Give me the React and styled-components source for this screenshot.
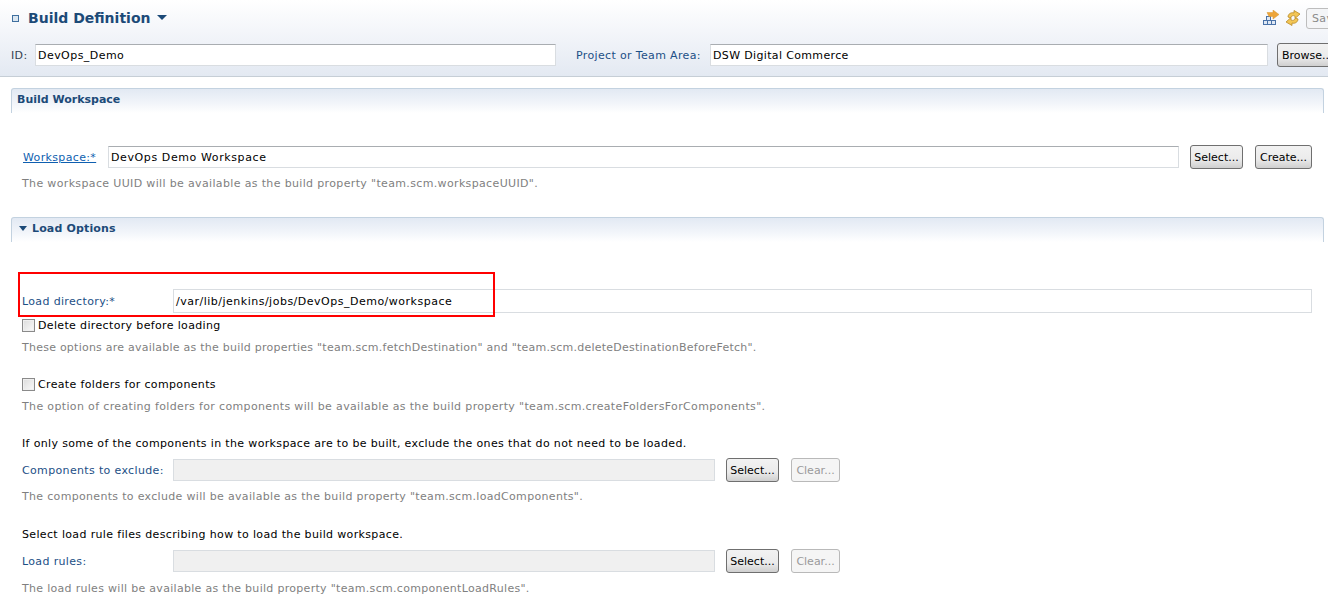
import React from 'react'
import styled, { createGlobalStyle } from 'styled-components'

const GlobalStyle = createGlobalStyle`
  html, body {
    margin: 0;
    padding: 0;
    background: #fff;
    overflow: hidden;
  }
  body {
    font-family: "DejaVu Sans", "Liberation Sans", sans-serif;
    font-size: 11px;
    letter-spacing: 0.35px;
    color: #000;
  }
`

const Page = styled.div`
  position: relative;
  width: 1328px;
  height: 600px;
  overflow: hidden;
`

const FormHeader = styled.header`
  height: 77px;
  box-sizing: border-box;
  border-bottom: 1px solid #c6ced6;
  background: linear-gradient(#ffffff 0%, #f4f6fa 40%, #e3e9f2 100%);
`

const TitleRow = styled.div`
  display: flex;
  align-items: center;
  height: 36px;
  padding-left: 12px;
`

const TitleBox = styled.span`
  width: 5px;
  height: 5px;
  border: 1px solid #3f6f9f;
  background: #dbe6f0;
  margin-right: 9px;
`

const Title = styled.h1`
  margin: 0;
  font-size: 14px;
  font-weight: 700;
  letter-spacing: 0;
  color: #1c4a78;
`

const Caret = styled.span`
  width: 0;
  height: 0;
  margin: -2px 0 0 7px;
  border-left: 5px solid transparent;
  border-right: 5px solid transparent;
  border-top: 5px solid #1c4a78;
`

const Tools = styled.div`
  display: flex;
  align-items: center;
  gap: 6px;
  margin-left: auto;
  margin-right: -18px;
`

const SaveButton = styled.span`
  display: block;
  width: 40px;
  height: 21px;
  margin-left: -1px;
  line-height: 19px;
  box-sizing: border-box;
  padding-left: 5px;
  border: 1px solid #bdbdbd;
  border-radius: 3px;
  color: #8a8a8a;
  background: #f4f5f7;
`

const IdRow = styled.div`
  display: flex;
  align-items: center;
  height: 22px;
  margin-top: 8px;
  padding-left: 11px;
`

const HeadLabel = styled.label`
  flex: none;
  width: ${(p) => p.$width}px;
  margin-left: ${(p) => p.$left || 0}px;
  color: ${(p) => (p.$link ? '#1c4f86' : '#333f4f')};
  white-space: nowrap;
`

const Input = styled.div`
  flex: none;
  box-sizing: border-box;
  width: ${(p) => p.$width}px;
  height: ${(p) => p.$height || 22}px;
  line-height: ${(p) => (p.$height || 22) - 1}px;
  padding-left: 2px;
  letter-spacing: ${(p) => p.$spacing || 0.45}px;
  background: ${(p) => (p.$disabled ? '#f0f0f0' : '#fff')};
  border: 1px solid #d9dde1;
  border-top-color: ${(p) => (p.$flat ? '#d9dde1' : '#a9adb1')};
  white-space: nowrap;
`

const Button = styled.button`
  flex: none;
  box-sizing: border-box;
  width: ${(p) => p.$width}px;
  height: 24px;
  margin-left: ${(p) => p.$left}px;
  padding: 0;
  font: inherit;
  color: ${(p) => (p.disabled ? '#9a9a9a' : '#000')};
  border: 1px solid ${(p) => (p.disabled ? '#b9b9b9' : '#6f6f6f')};
  border-radius: 3px;
  background: ${(p) =>
    p.disabled ? '#f5f5f5' : 'linear-gradient(#f2f2f2 0%, #ebebeb 60%, #cfcfcf 100%)'};
`

const BrowseButton = styled(Button)`
  margin-right: -20px;
  text-align: left;
  padding-left: 4px;
`

const SectionBar = styled.div`
  display: flex;
  align-items: center;
  height: 21px;
  padding-bottom: 3px;
  margin: ${(p) => p.$top}px 4px 0 11px;
  padding-left: 5px;
  border: 1px solid #c3d2e0;
  border-bottom: none;
  border-radius: 3px 3px 0 0;
  background: linear-gradient(#e2e9f3 0%, #f2f5fa 60%, #ffffff 100%);
  color: #1c4a78;
  font-weight: 700;
  letter-spacing: ${(p) => p.$spacing || 0}px;
`

const SectionArrow = styled.span`
  width: 0;
  height: 0;
  margin: 0 5px 0 2px;
  border-left: 4px solid transparent;
  border-right: 4px solid transparent;
  border-top: 5px solid #1c4a78;
`

const FieldRow = styled.div`
  display: flex;
  align-items: center;
  height: ${(p) => p.$height || 22}px;
  margin-top: ${(p) => p.$top}px;
  padding-left: 22px;
`

const FieldLabel = styled.span`
  flex: none;
  width: ${(p) => p.$width}px;
  margin-left: ${(p) => p.$left || 0}px;
  margin-right: ${(p) => p.$gap || 0}px;
  color: ${(p) => (p.$link ? '#0f5fb0' : '#1c4f86')};
  text-decoration: ${(p) => (p.$link ? 'underline' : 'none')};
`

const Hint = styled.p`
  margin: ${(p) => p.$top}px 0 0 22px;
  height: 17px;
  line-height: 17px;
  letter-spacing: ${(p) => p.$spacing || 0.35}px;
  color: #7f7f7f;
  white-space: nowrap;
`

const CheckRow = styled.label`
  display: flex;
  align-items: center;
  gap: 3px;
  height: 17px;
  margin: ${(p) => p.$top}px 0 0 22px;
`

const Box = styled.span`
  flex: none;
  box-sizing: border-box;
  width: 13px;
  height: 13px;
  border: 1px solid #8a8a8a;
  background: linear-gradient(135deg, #dcdcdc, #fafafa);
  box-shadow: inset 0 0 0 1px #efefef;
`

const Note = styled.p`
  margin: ${(p) => p.$top}px 0 0 22px;
  height: 17px;
  line-height: 17px;
  white-space: nowrap;
`

const Highlight = styled.div`
  position: absolute;
  left: 18px;
  top: 272px;
  width: 477px;
  height: 45px;
  box-sizing: border-box;
  border: 2px solid #f00;
`

const BuildIcon = () => (
  <svg width="16" height="16" viewBox="0 0 16 16">
    <g fill="#dfe8f4" stroke="#4a72a8" strokeWidth="1">
      <rect x="3.500" y="6.500" width="4" height="4" />
      <rect x="0.500" y="10.500" width="4" height="4" />
      <rect x="4.500" y="10.500" width="4" height="4" />
      <rect x="8.500" y="10.500" width="4" height="4" />
    </g>
    <path d="M4 2.500h6V0l6 4.500L10 9V6.500H6z" fill="#eda53a" stroke="#d9962f" strokeWidth="0.5" />
  </svg>
)

const RefreshIcon = () => (
  <svg width="16" height="16" viewBox="0 0 16 16">
    <path d="M3 7C3 4 6 2 9 3V.5L15 4l-5 4.500V6C8 5 6 6 5.500 8z" fill="#f3c655" stroke="#b98a28" strokeWidth="0.8" />
    <path d="M13 9c0 3-3 5-6 4v2.500L1 12l5-4.500V10c2 1 4 0 4.500-2z" fill="#f3c655" stroke="#b98a28" strokeWidth="0.8" />
  </svg>
)

const App = () => (
  <Page>
    <GlobalStyle />
    <FormHeader>
      <TitleRow>
        <TitleBox />
        <Title>Build Definition</Title>
        <Caret />
        <Tools>
          <BuildIcon />
          <RefreshIcon />
          <SaveButton>Save</SaveButton>
        </Tools>
      </TitleRow>
      <IdRow>
        <HeadLabel $width={24}>ID:</HeadLabel>
        <Input $width={521}>DevOps_Demo</Input>
        <HeadLabel $link $left={20} $width={134}>Project or Team Area:</HeadLabel>
        <Input $width={558} $spacing={0.35}>DSW Digital Commerce</Input>
        <BrowseButton $width={60} $left={9}>Browse...</BrowseButton>
      </IdRow>
    </FormHeader>

    <SectionBar $top={11}>Build Workspace</SectionBar>
    <FieldRow $top={33}>
      <FieldLabel $link $left={1} $width={75} $gap={10}>Workspace:*</FieldLabel>
      <Input $width={1071} $spacing={0.6}>DevOps Demo Workspace</Input>
      <Button $width={53} $left={11}>Select...</Button>
      <Button $width={57} $left={12}>Create...</Button>
    </FieldRow>
    <Hint $top={7}>The workspace UUID will be available as the build property "team.scm.workspaceUUID".</Hint>

    <SectionBar $top={25} $spacing={0.15}><SectionArrow />Load Options</SectionBar>
    <FieldRow $top={47} $height={24}>
      <FieldLabel $width={151}>Load directory:*</FieldLabel>
      <Input $width={1139} $height={24} $flat $spacing={0.5}>/var/lib/jenkins/jobs/DevOps_Demo/workspace</Input>
    </FieldRow>
    <CheckRow $top={4}>
      <Box />
      Delete directory before loading
    </CheckRow>
    <Hint $top={5} $spacing={0.24}>These options are available as the build properties "team.scm.fetchDestination" and "team.scm.deleteDestinationBeforeFetch".</Hint>
    <CheckRow $top={20}>
      <Box />
      Create folders for components
    </CheckRow>
    <Hint $top={5}>The option of creating folders for components will be available as the build property "team.scm.createFoldersForComponents".</Hint>
    <Note $top={20}>If only some of the components in the workspace are to be built, exclude the ones that do not need to be loaded.</Note>
    <FieldRow $top={6} $height={24}>
      <FieldLabel $width={151}>Components to exclude:</FieldLabel>
      <Input $width={542} $height={22} $disabled $flat />
      <Button $width={53} $left={11}>Select...</Button>
      <Button $width={49} $left={12} disabled>Clear...</Button>
    </FieldRow>
    <Hint $top={6} $spacing={0.32}>The components to exclude will be available as the build property "team.scm.loadComponents".</Hint>
    <Note $top={21}>Select load rule files describing how to load the build workspace.</Note>
    <FieldRow $top={6} $height={24}>
      <FieldLabel $width={151}>Load rules:</FieldLabel>
      <Input $width={542} $height={22} $disabled $flat />
      <Button $width={53} $left={11}>Select...</Button>
      <Button $width={49} $left={12} disabled>Clear...</Button>
    </FieldRow>
    <Hint $top={7} $spacing={0.3}>The load rules will be available as the build property "team.scm.componentLoadRules".</Hint>

    <Highlight />
  </Page>
)

export default App
